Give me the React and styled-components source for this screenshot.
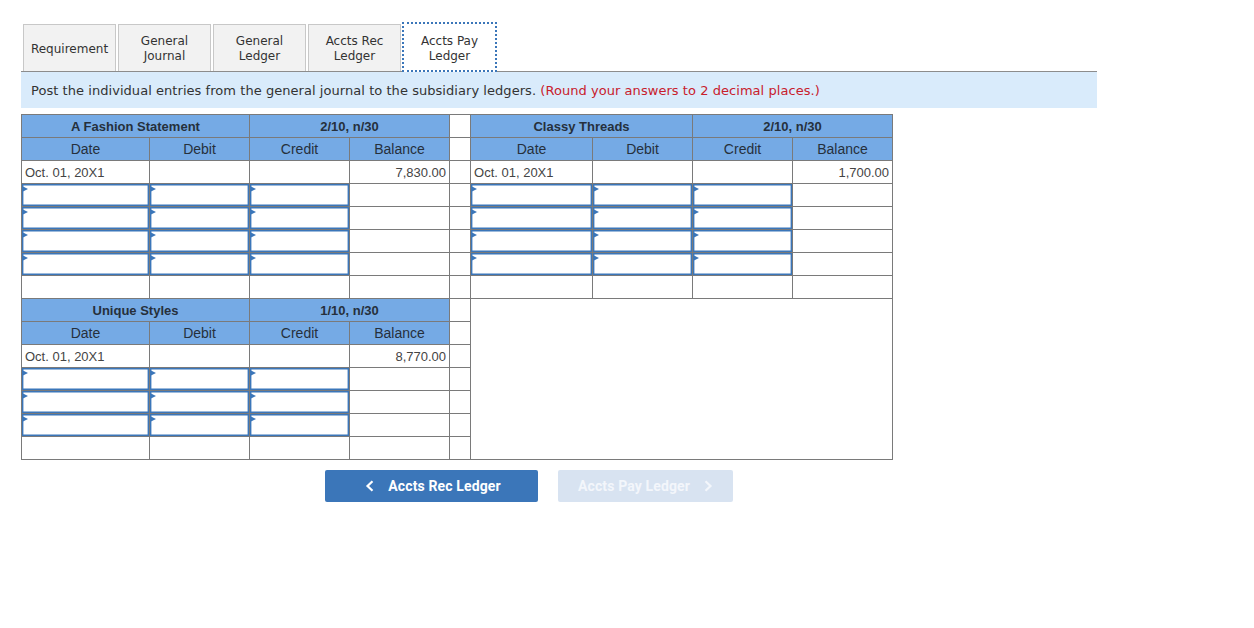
import React from 'react';
import styled, { createGlobalStyle } from 'styled-components';

const Global = createGlobalStyle`
  html, body { margin: 0; padding: 0; background: #fff; }
`;
const Page = styled.div`
  width: 1076px;
  margin-left: 21px;
  padding-top: 24px;
`;
const Tabs = styled.div`
  display: flex;
  gap: 2px;
  padding-left: 2px;
  height: 47px;
  border-bottom: 1px solid #8c8c8c;
`;
const Tab = styled.div`
  box-sizing: border-box;
  width: 93px;
  height: 47px;
  padding-top: 2px;
  display: flex;
  align-items: center;
  justify-content: center;
  text-align: center;
  font: 12px/15px "DejaVu Sans", Verdana, sans-serif;
  color: #333;
  background: ${p => (p.$active ? '#fff' : '#f2f2f2')};
  border: 1px solid #c8c8c8;
  border-bottom: none;
  ${p => p.$active && `
    position: relative;
    z-index: 1;
    width: 95px;
    height: 50px;
    padding-top: 3px;
    margin: -2px 0 0 -1px;
    border: 2px dotted #3b76b9;
  `}
`;
const Instruction = styled.div`
  height: 36px;
  background: #d9ebfb;
  padding-left: 10px;
  display: flex;
  align-items: center;
  font: 13px "DejaVu Sans", Verdana, sans-serif;
  letter-spacing: 0.05px;
  color: #333;
  white-space: pre;
`;
const Red = styled.span`
  color: #c8202c;
`;
const Sheet = styled.table`
  border-collapse: collapse;
  table-layout: fixed;
  width: 872px;
  margin-top: 6px;
  font: 14px "Liberation Sans", Arial, sans-serif;
  color: #333;
  & td, & th { border: 1px solid #7a7a7a; padding: 0; height: 23px; box-sizing: border-box; }
`;
const Title = styled.th`
  background: #75aae5;
  font-weight: 700;
  font-size: 13px;
  text-align: center;
  color: #26303c;
`;
const Head = styled.th`
  background: #75aae5;
  font-weight: 400;
  text-align: center;
  color: #26303c;
`;
const Cell = styled.td`
  background: #fff;
  position: relative;
  font-size: 13px;
  text-align: ${p => (p.$num ? 'right' : 'left')};
  padding: ${p => (p.$num ? '1px 3px 0 0' : '1px 0 0 3px')} !important;
  color: #444;
  line-height: 21px;
`;
const Blank = styled.td`
  background: #fff;
`;
const InputCell = styled.td`
  background: #fff;
  position: relative;
`;
const InputBox = styled.div`
  position: absolute;
  inset: 0;
  box-sizing: border-box;
  border: 1px solid #3b76b9;
  box-shadow: inset 0 0 0 0.4px #3b76b9;
`;
const Marker = styled.span`
  position: absolute;
  left: 0;
  top: 2px;
  width: 0;
  height: 0;
  border-top: 3.5px solid transparent;
  border-bottom: 3.5px solid transparent;
  border-left: 6px solid #3b76b9;
`;
const Nav = styled.div`
  display: flex;
  gap: 20px;
  margin: 10px 0 0 304px;
`;
const NavBtn = styled.div`
  box-sizing: border-box;
  width: ${p => p.$w}px;
  height: 32px;
  padding-left: ${p => (p.$disabled ? 0 : 3)}px;
  border-radius: 2px;
  display: flex;
  align-items: center;
  justify-content: center;
  gap: 14px;
  font: 700 14px "Roboto", "Liberation Sans", sans-serif;
  letter-spacing: 0.13px;
  color: ${p => (p.$disabled ? '#f3f6fb' : '#fff')};
  background: ${p => (p.$disabled ? '#d8e3f1' : '#3b76b9')};
`;

const Chevron = ({ left }) => (
  <svg width="9" height="12" viewBox="0 0 9 12" aria-hidden="true">
    <path d={left ? 'M7.5 1.2 2.5 6 7.5 10.8' : 'M1.5 1.2 6.5 6 1.5 10.8'} fill="none" stroke="currentColor" strokeWidth="2.2" />
  </svg>
);

const Col = styled.col`
  width: ${p => p.$w}px;
`;

const widths = [128, 100, 100, 100, 21, 122, 100, 100, 100];
const cols = ['Date', 'Debit', 'Credit', 'Balance'];

const HeaderA = ({ name, terms }) => (
  <>
    <Title colSpan={2}>{name}</Title>
    <Title colSpan={2}>{terms}</Title>
  </>
);
const Heads = () => cols.map(c => <Head key={c}>{c}</Head>);
const Opening = ({ balance }) => (
  <>
    <Cell>Oct. 01, 20X1</Cell>
    <Blank />
    <Blank />
    <Cell $num>{balance}</Cell>
  </>
);
const Inputs = () => (
  <>
    {[0, 1, 2].map(i => (
      <InputCell key={i}>
        <InputBox />
        <Marker />
      </InputCell>
    ))}
    <Blank />
  </>
);
const Blanks = () => (
  <>
    <Blank />
    <Blank />
    <Blank />
    <Blank />
  </>
);

const tabs = [['Requirement'], ['General', 'Journal'], ['General', 'Ledger'], ['Accts Rec', 'Ledger']];

export default function App() {
  return (
    <Page>
      <Global />
      <Tabs>
        {tabs.map(t => (
          <Tab key={t.join()}>
            <div>
              {t[0]}
              {t[1] && <br />}
              {t[1]}
            </div>
          </Tab>
        ))}
        <Tab $active>
          <div>
            Accts Pay
            <br />
            Ledger
          </div>
        </Tab>
      </Tabs>
      <Instruction>
        Post the individual entries from the general journal to the subsidiary ledgers. <Red>(Round your answers to 2 decimal places.)</Red>
      </Instruction>
      <Sheet>
        <colgroup>
          {widths.map((w, i) => (
            <Col key={i} $w={w} />
          ))}
        </colgroup>
        <tbody>
          <tr>
            <HeaderA name="A Fashion Statement" terms="2/10, n/30" />
            <Blank />
            <HeaderA name="Classy Threads" terms="2/10, n/30" />
          </tr>
          <tr>
            <Heads />
            <Blank />
            <Heads />
          </tr>
          <tr>
            <Opening balance="7,830.00" />
            <Blank />
            <Opening balance="1,700.00" />
          </tr>
          {[0, 1, 2, 3].map(i => (
            <tr key={i}>
              <Inputs />
              <Blank />
              <Inputs />
            </tr>
          ))}
          <tr>
            <Blanks />
            <Blank />
            <Blanks />
          </tr>
          <tr>
            <HeaderA name="Unique Styles" terms="1/10, n/30" />
            <Blank />
            <Blank colSpan={4} rowSpan={7} />
          </tr>
          <tr>
            <Heads />
            <Blank />
          </tr>
          <tr>
            <Opening balance="8,770.00" />
            <Blank />
          </tr>
          {[0, 1, 2].map(i => (
            <tr key={i}>
              <Inputs />
              <Blank />
            </tr>
          ))}
          <tr>
            <Blanks />
            <Blank />
          </tr>
        </tbody>
      </Sheet>
      <Nav>
        <NavBtn $w={213}>
          <Chevron left />
          Accts Rec Ledger
        </NavBtn>
        <NavBtn $w={175} $disabled>
          Accts Pay Ledger
          <Chevron />
        </NavBtn>
      </Nav>
    </Page>
  );
}
